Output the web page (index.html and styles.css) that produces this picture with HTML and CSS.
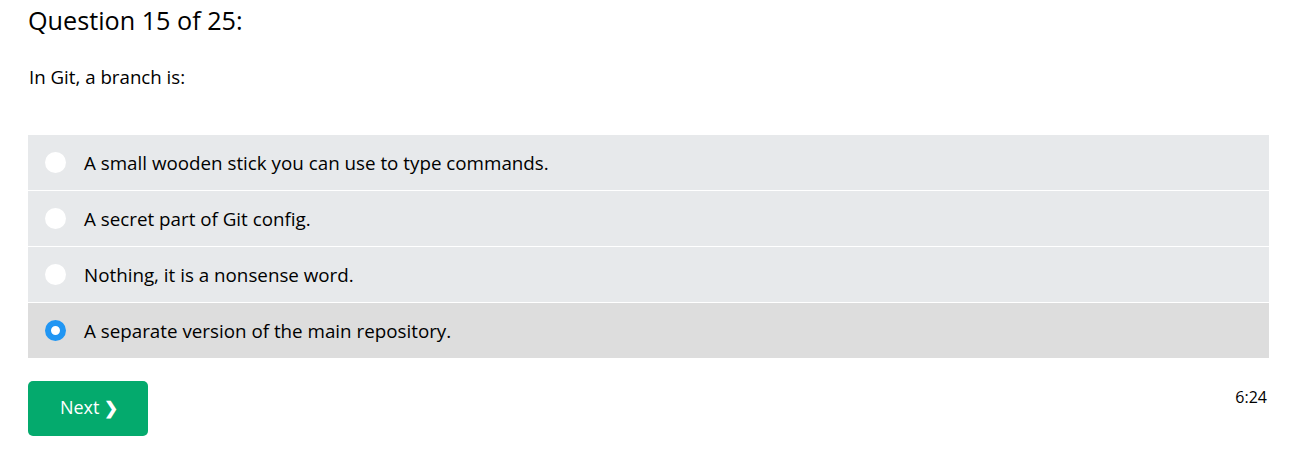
FILE: index.html
```html
<!DOCTYPE html>
<html>
<head>
<meta charset="utf-8">
<link rel="stylesheet" href="styles.css">
</head>
<body>
<div class="quiz">
  <h3 class="qnum">Question 15 of 25:</h3>
  <p class="qtext">In Git, a branch is:</p>
  <div class="options">
    <label class="opt"><span class="radio"></span><span class="otext">A small wooden stick you can use to type commands.</span></label>
    <label class="opt"><span class="radio"></span><span class="otext">A secret part of Git config.</span></label>
    <label class="opt"><span class="radio"></span><span class="otext">Nothing, it is a nonsense word.</span></label>
    <label class="opt selected"><span class="radio checked"></span><span class="otext">A separate version of the main repository.</span></label>
  </div>
  <div class="footer">
    <button class="next">Next <span class="chev">❯</span></button>
    <span class="timer">6:24</span>
  </div>
</div>
</body>
</html>
```
FILE: styles.css
```css
* { box-sizing: border-box; }
body {
  margin: 0;
  font-family: "Open Sans", "Noto Sans", sans-serif;
  color: #000;
  background: #fff;
}
.quiz {
  padding: 0 23px 0 28px;
}
.qnum {
  margin: 0;
  padding-top: 5px;
  font-size: 25.2px;
  font-weight: 400;
  line-height: 30px;
}
.qtext {
  margin: 30px 0 0 1px;
  font-size: 18.7px;
  line-height: 24px;
}
.options {
  margin-top: 46px;
  display: flex;
  flex-direction: column;
  gap: 1px;
}
.opt {
  display: flex;
  align-items: center;
  height: 55px;
  background: #e7e9eb;
  padding-left: 17px;
  font-size: 18.8px;
}
.opt.selected { background: #dddddd; }
.radio {
  width: 21px;
  height: 21px;
  border-radius: 50%;
  background: #fff;
  flex: none;
  margin-right: 18px;
}
.radio.checked {
  background: #fff;
  border: 6px solid #2196f3;
}
.footer {
  margin-top: 23px;
  display: flex;
  justify-content: space-between;
  align-items: flex-start;
}
.next {
  width: 120px;
  height: 55px;
  border: none;
  border-radius: 5px;
  background: #04aa6d;
  color: #fff;
  font-family: inherit;
  font-size: 18px;
  padding: 0 0 3px 2px;
}
.chev {
  font-weight: 700;
  font-size: 17px;
}
.timer {
  margin-top: 5px;
  font-size: 16px;
  margin-right: 2px;
}
```
